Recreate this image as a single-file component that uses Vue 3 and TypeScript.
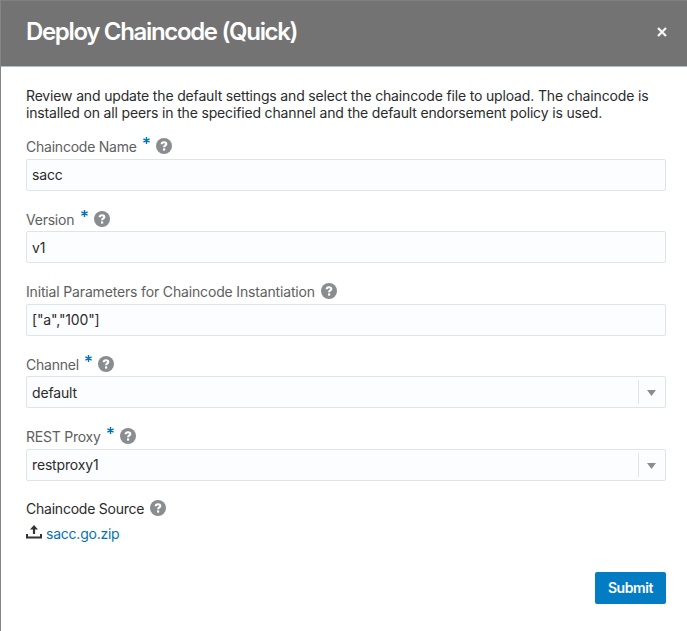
<script setup lang="ts">
import { ref } from 'vue'

interface Field {
  id: string
  label: string
  value: string
  required: boolean
  select: boolean
}

const fields = ref<Field[]>([
  { id: 'name', label: 'Chaincode Name', value: 'sacc', required: true, select: false },
  { id: 'version', label: 'Version', value: 'v1', required: true, select: false },
  { id: 'params', label: 'Initial Parameters for Chaincode Instantiation', value: '["a","100"]', required: false, select: false },
  { id: 'channel', label: 'Channel', value: 'default', required: true, select: true },
  { id: 'proxy', label: 'REST Proxy', value: 'restproxy1', required: true, select: true },
])
</script>

<template>
  <main class="dialog">
    <header class="header">
      <h1>Deploy Chaincode (Quick)</h1>
      <button class="close" aria-label="Close">
        <svg width="10" height="10" viewBox="0 0 10 10"><path d="M1 1 9 9M9 1 1 9" /></svg>
      </button>
    </header>
    <section class="body">
      <p class="intro">
        <span>Review and update the default settings and select the chaincode file to upload. The chaincode is</span><br />
        <span>installed on all peers in the specified channel and the default endorsement policy is used.</span>
      </p>
      <div v-for="f in fields" :key="f.id" class="field">
        <div class="label-row">
          <label :for="f.id" :class="{ tight: f.required }">{{ f.label }}</label>
          <svg v-if="f.required" class="star" width="7" height="7" viewBox="0 0 7 7"><path d="M3.5 0V7M.4 1.8 6.6 5.2M6.6 1.8.4 5.2" /></svg>
          <svg class="help" width="16" height="16" viewBox="0 0 16 16">
            <circle cx="8" cy="8" r="8" /><path d="M5.7 6.3C5.7 4.9 6.7 4.2 8 4.2s2.3.7 2.3 1.8C10.3 7.4 8.1 7.4 8.1 9.3" /><rect x="7" y="10.4" width="2.2" height="2.2" />
          </svg>
        </div>
        <div class="control">
          <input :id="f.id" v-model="f.value" :readonly="f.select" spellcheck="false" />
          <span v-if="f.select" class="arrow">
            <svg width="9" height="6" viewBox="0 0 9 6"><path d="M0 0H9L4.5 6Z" /></svg>
          </span>
        </div>
      </div>
      <div class="label-row source">
        <span class="tight">Chaincode Source</span>
        <svg class="help" width="16" height="16" viewBox="0 0 16 16">
          <circle cx="8" cy="8" r="8" /><path d="M5.7 6.3C5.7 4.9 6.7 4.2 8 4.2s2.3.7 2.3 1.8C10.3 7.4 8.1 7.4 8.1 9.3" /><rect x="7" y="10.4" width="2.2" height="2.2" />
        </svg>
      </div>
      <a class="file">
        <svg width="16" height="14" viewBox="0 0 16 14"><path d="M8 0 12 4.5H9.1V9H6.9V4.5H4ZM0 9H2V11.6H14V9H16V13.6H0Z" /></svg>
        <span>sacc.go.zip</span>
      </a>
      <footer><button class="submit">Submit</button></footer>
    </section>
  </main>
</template>

<style>
body { margin: 0; background: #fff; overflow: hidden; }
</style>

<style scoped>
.dialog {
  box-sizing: border-box;
  width: 687px;
  height: 631px;
  border-left: 1px solid #858585;
  font-family: Inter, "Liberation Sans", sans-serif;
  font-size: 14px;
  letter-spacing: -0.16px;
  color: #2b2b2b;
  background: #fff;
}
.header {
  box-sizing: border-box;
  height: 67px;
  display: flex;
  justify-content: space-between;
  align-items: flex-start;
  padding: 17px 20px 0 25px;
  background: #737373;
  border-top: 1px solid #808080;
  border-bottom: 1px solid #b1c0c8;
}
h1 {
  margin: 0;
  color: #fff;
  font-size: 24px;
  line-height: 28px;
  font-weight: 600;
  letter-spacing: -1.33px;
  white-space: nowrap;
}
button { border: 0; font-family: inherit; }
.close { display: flex; padding: 9px 0 0; background: none; }
.close path { stroke: #f4f4f4; stroke-width: 2.4; fill: none; }
.body { padding: 20px 21px 0 25px; }
.intro { margin: 0; height: 50.3px; line-height: 17px; white-space: nowrap; }
.field { height: 72.45px; }
.label-row { display: flex; height: 21.7px; color: #606060; line-height: 20px; white-space: nowrap; }
.tight { letter-spacing: -0.23px; }
.star { margin: 0 0 0 6.6px; }
.star path { stroke: #0572b8; stroke-width: 1.4; fill: none; }
.help { margin: 1px 0 0 6px; }
.help circle { fill: #8a8d90; }
.help path { stroke: #fff; stroke-width: 2.1; fill: none; }
.help rect { fill: #fff; }
.control {
  box-sizing: border-box;
  display: flex;
  align-items: center;
  height: 32px;
  border: 1px solid #dfe4e7;
  border-radius: 2px;
  background: #fcfdfe;
}
input {
  flex: 1;
  min-width: 0;
  padding: 0 5px;
  border: 0;
  outline: 0;
  background: transparent;
  font: inherit;
  letter-spacing: inherit;
  color: #2b2b2b;
}
.arrow {
  box-sizing: border-box;
  display: flex;
  align-items: center;
  width: 27px;
  height: 24px;
  padding: 2px 0 0 8px;
  border-left: 1px solid #dfe4e7;
}
.arrow path { fill: #8a8d90; }
.source { color: #2b2b2b; }
.file { display: flex; padding-top: 2.5px; height: 20px; line-height: 20px; letter-spacing: -0.23px; color: #0572b8; }
.file svg { margin: 1.3px 4px 0 0; }
.file path { fill: #333; }
footer { display: flex; justify-content: flex-end; margin-top: 28.4px; }
.submit {
  width: 71px;
  height: 32px;
  padding: 0 0 1px;
  border-radius: 2px;
  color: #fff;
  background: #047cc4;
  font-size: 14px;
  font-weight: 600;
  letter-spacing: -0.4px;
}
</style>
